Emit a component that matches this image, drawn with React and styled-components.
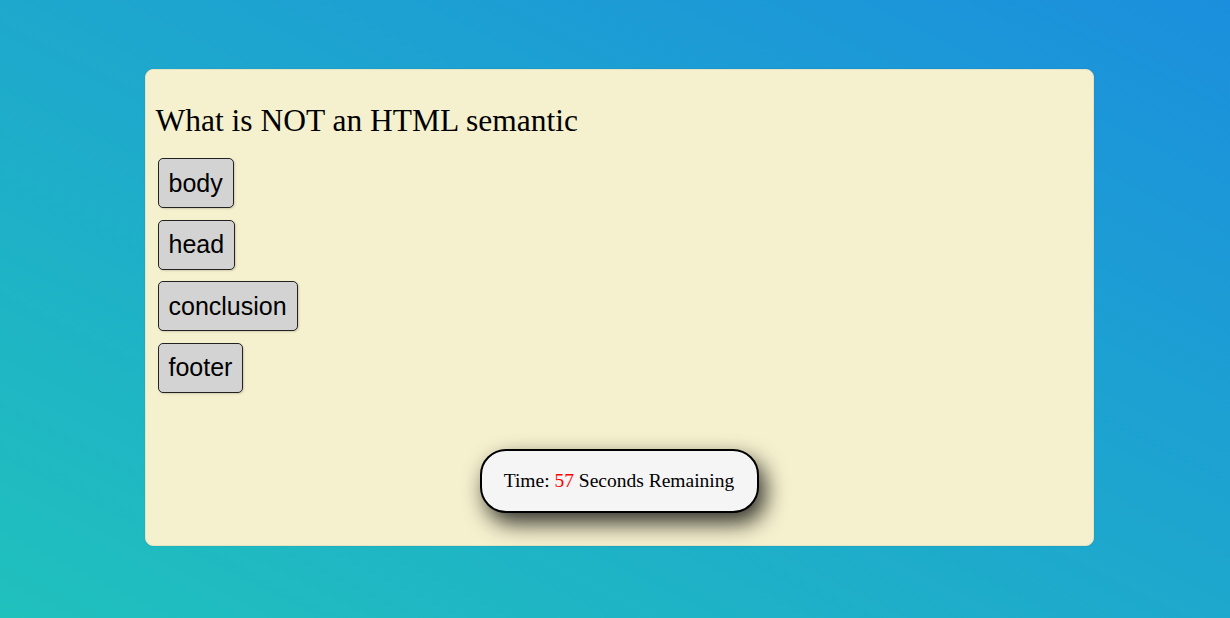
import React from "react";
import styled, { createGlobalStyle } from "styled-components";

const Global = createGlobalStyle`
  html, body { margin: 0; padding: 0; }
  body {
    width: 1230px;
    height: 618px;
    overflow: hidden;
    background: linear-gradient(to top right, #20c1bd 0%, #1b8fdd 100%);
  }
`;

const Page = styled.div`
  height: 618px;
  display: flex;
  justify-content: center;
  align-items: flex-start;
  padding: 69px 0 0 8px;
  box-sizing: border-box;
`;

const Card = styled.div`
  width: 949px;
  height: 477px;
  box-sizing: border-box;
  background: #f5f0ce;
  border-radius: 8px;
  border: 1px solid #e6e2c4;
  box-shadow: 0 0 2px rgba(0,0,0,0.1);
  display: flex;
  flex-direction: column;
  padding: 0 0 32px 10px;
`;

const Question = styled.h2`
  margin: 32px 0 19px 0;
  font-family: "Liberation Serif", serif;
  font-weight: 400;
  font-size: 31.5px;
  line-height: 37px;
  color: #000;
`;

const Options = styled.div`
  display: flex;
  flex-direction: column;
  align-items: flex-start;
  gap: 11.5px;
  padding-left: 2px;
`;

const Option = styled.button`
  font-family: "Liberation Sans", Arial, sans-serif;
  font-size: 25px;
  color: #000;
  background: #d3d3d3;
  border: 1px solid #222;
  border-radius: 5px;
  height: 50px;
  padding: 0 10px;
  box-shadow: 1px 1px 2px rgba(0,0,0,0.15);
  cursor: pointer;
`;

const Timer = styled.div`
  margin-top: auto;
  align-self: center;
  margin-left: -10px;
  width: 279px;
  height: 64px;
  box-sizing: border-box;
  border: 2px solid #000;
  border-radius: 26px;
  background: #f5f5f5;
  box-shadow: 6px 10px 22px rgba(0,0,0,0.8);
  display: flex;
  align-items: center;
  justify-content: center;
  font-family: "Liberation Serif", serif;
  font-size: 19.5px;
  color: #000;
`;

const Count = styled.span`
  color: #f00;
`;

export default function App() {
  const options = ["body", "head", "conclusion", "footer"];
  return (
    <>
      <Global />
      <Page>
        <Card>
          <Question>What is NOT an HTML semantic</Question>
          <Options>
            {options.map((o) => (
              <Option key={o}>{o}</Option>
            ))}
          </Options>
          <Timer>
            Time:&nbsp;<Count>57</Count>&nbsp;Seconds Remaining
          </Timer>
        </Card>
      </Page>
    </>
  );
}
